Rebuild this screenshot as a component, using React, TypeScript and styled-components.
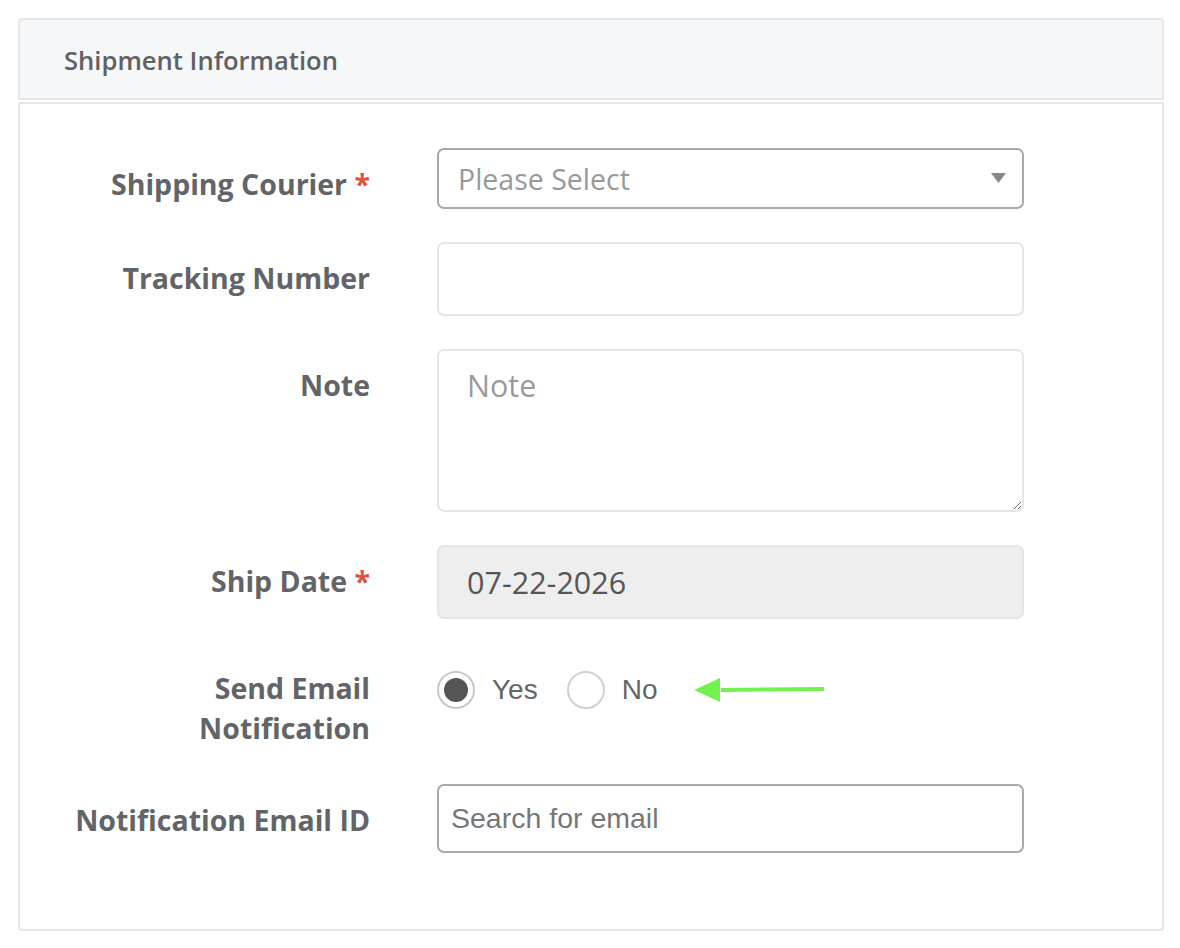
import styled, { createGlobalStyle } from 'styled-components';

const GlobalStyle = createGlobalStyle`
  body {
    margin: 0;
    background: #ffffff;
    font-family: 'Open Sans', sans-serif;
  }
  * { box-sizing: border-box; }
`;

function App() {
  return (
    <Page>
      <GlobalStyle />
      <PanelHeader>Shipment Information</PanelHeader>
      <PanelBody>
        <FormRow>
          <Label>Shipping Courier <Required>*</Required></Label>
          <SelectBox>
            <SelectText>Please Select</SelectText>
            <svg width="15" height="11" viewBox="0 0 15 11">
              <path d="M0 0 L15 0 L7.5 10 Z" fill="#888888" />
            </svg>
          </SelectBox>
        </FormRow>
        <FormRow>
          <Label>Tracking Number</Label>
          <TextInput />
        </FormRow>
        <FormRow>
          <Label>Note</Label>
          <NoteArea placeholder="Note" />
        </FormRow>
        <FormRow>
          <Label>Ship Date <Required>*</Required></Label>
          <TextInput $readOnly readOnly value="07-22-2026" />
        </FormRow>
        <FormRow>
          <Label $extraBottom>Send Email<br />Notification</Label>
          <RadioGroup>
            <RadioOption>
              <RadioCircle $checked />
              Yes
            </RadioOption>
            <RadioOption>
              <RadioCircle />
              No
            </RadioOption>
            <svg width="132" height="26" viewBox="0 0 132 26">
              <path d="M27 13 L130 12" stroke="#72f24f" strokeWidth="4" fill="none" />
              <path d="M0 13 L26 1 L26 25 Z" fill="#72f24f" />
            </svg>
          </RadioGroup>
        </FormRow>
        <FormRow>
          <Label>Notification Email ID</Label>
          <EmailInput placeholder="Search for email" />
        </FormRow>
      </PanelBody>
    </Page>
  );
}

const Page = styled.div`
  width: 1146px;
  margin: 18px 0 0 18px;
  display: flex;
  flex-direction: column;
  gap: 2px;
`;

const PanelHeader = styled.div`
  height: 82px;
  display: flex;
  align-items: center;
  padding: 2px 0 0 44px;
  background: #f6f7f9;
  border: 2px solid #e6e7e9;
  border-radius: 4px 4px 0 0;
  font-size: 25.6px;
  font-weight: 600;
  color: #606165;
`;

const PanelBody = styled.div`
  height: 829px;
  border: 2px solid #e6e7e9;
  border-radius: 0 0 4px 4px;
  padding-top: 44px;
  display: flex;
  flex-direction: column;
  gap: 33px;
`;

const FormRow = styled.div`
  display: flex;
  align-items: flex-start;
  gap: 67px;
`;

const Label = styled.div<{ $extraBottom?: boolean }>`
  width: 350px;
  padding-top: 16px;
  padding-bottom: ${(p) => (p.$extraBottom ? '3px' : '0')};
  text-align: right;
  font-size: 28.5px;
  line-height: 40px;
  font-weight: 700;
  color: #636467;
`;

const Required = styled.span`
  color: #e0533e;
`;

const SelectBox = styled.div`
  width: 587px;
  height: 61px;
  border: 2px solid #a9a9a9;
  border-radius: 7px;
  display: flex;
  align-items: center;
  justify-content: space-between;
  padding: 0 16px 0 19px;
`;

const SelectText = styled.span`
  font-size: 28.5px;
  color: #999999;
`;

const TextInput = styled.input<{ $readOnly?: boolean }>`
  width: 587px;
  height: 74px;
  border: 2px solid #e5e5e5;
  border-radius: 7px;
  padding: 0 28px;
  font-family: 'Open Sans', sans-serif;
  font-size: 30.5px;
  color: #555555;
  background: ${(p) => (p.$readOnly ? '#eeeeee' : '#ffffff')};
  outline: none;
`;

const NoteArea = styled.textarea`
  width: 587px;
  height: 163px;
  border: 2px solid #e5e5e5;
  border-radius: 7px;
  padding: 14px 28px;
  font-family: 'Open Sans', sans-serif;
  font-size: 30.5px;
  line-height: 40px;
  color: #555555;
  outline: none;
  resize: vertical;
  &::placeholder { color: #9a9a9a; }
`;

const RadioGroup = styled.div`
  display: flex;
  align-items: center;
  height: 40px;
  margin-top: 18px;
  gap: 29px;
  svg { margin-left: 8px; }
`;

const RadioOption = styled.label`
  display: flex;
  align-items: center;
  gap: 17px;
  font-family: 'Liberation Sans', Arial, sans-serif;
  font-size: 28px;
  color: #666666;
`;

const RadioCircle = styled.span<{ $checked?: boolean }>`
  width: 38px;
  height: 38px;
  border-radius: 50%;
  border: 2px solid ${(p) => (p.$checked ? '#c8c8c8' : '#d0d0d0')};
  background: #ffffff;
  display: flex;
  align-items: center;
  justify-content: center;
  &::after {
    content: '';
    width: 24px;
    height: 24px;
    border-radius: 50%;
    background: ${(p) => (p.$checked ? '#555555' : 'transparent')};
  }
`;

const EmailInput = styled.input`
  width: 587px;
  height: 69px;
  border: 2px solid #a9a9a9;
  border-radius: 7px;
  padding: 0 12px;
  font-family: 'Liberation Sans', Arial, sans-serif;
  font-size: 28.5px;
  color: #555555;
  outline: none;
  &::placeholder { color: #777777; }
`;

export default App;
